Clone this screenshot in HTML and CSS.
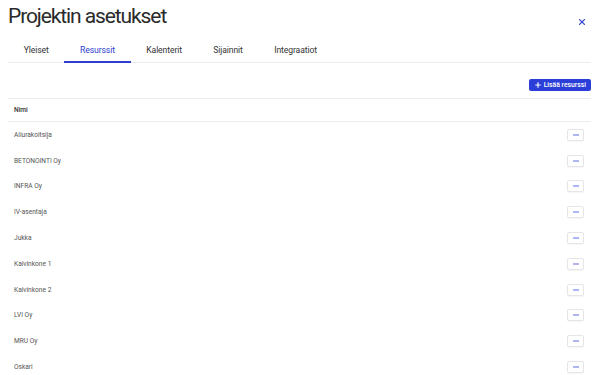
FILE: index.html
```html
<!DOCTYPE html>
<html lang="fi">
<head>
<meta charset="utf-8">
<title>Projektin asetukset</title>
<link rel="stylesheet" href="styles.css">
</head>
<body>
<div class="page">
  <header class="header">
    <h1 class="title">Projektin asetukset</h1>
    <button class="close" aria-label="Sulje">
      <svg width="6" height="6" viewBox="0 0 6 6"><path d="M0.6 0.6L5.4 5.4M5.4 0.6L0.6 5.4" stroke="#3346d3" stroke-width="1.3" stroke-linecap="round"/></svg>
    </button>
  </header>
  <nav class="tabs">
    <a class="tab">Yleiset</a>
    <a class="tab active">Resurssit</a>
    <a class="tab">Kalenterit</a>
    <a class="tab">Sijainnit</a>
    <a class="tab">Integraatiot</a>
  </nav>
  <div class="toolbar">
    <button class="add-btn">
      <svg width="6" height="6" viewBox="0 0 6 6"><path d="M3 0.3V5.7M0.3 3H5.7" stroke="#fff" stroke-width="1.1"/></svg>
      <span>Lisää resurssi</span>
    </button>
  </div>
  <div class="table">
    <div class="thead">Nimi</div>
    <div class="row"><span>Aliurakoitsija</span><button class="more"><svg width="6" height="2" viewBox="0 0 6 2"><circle cx="1" cy="1" r="0.8"/><circle cx="3" cy="1" r="0.8"/><circle cx="5" cy="1" r="0.8"/></svg></button></div>
    <div class="row"><span>BETONOINTI Oy</span><button class="more"><svg width="6" height="2" viewBox="0 0 6 2"><circle cx="1" cy="1" r="0.8"/><circle cx="3" cy="1" r="0.8"/><circle cx="5" cy="1" r="0.8"/></svg></button></div>
    <div class="row"><span>INFRA Oy</span><button class="more"><svg width="6" height="2" viewBox="0 0 6 2"><circle cx="1" cy="1" r="0.8"/><circle cx="3" cy="1" r="0.8"/><circle cx="5" cy="1" r="0.8"/></svg></button></div>
    <div class="row"><span>IV-asentaja</span><button class="more"><svg width="6" height="2" viewBox="0 0 6 2"><circle cx="1" cy="1" r="0.8"/><circle cx="3" cy="1" r="0.8"/><circle cx="5" cy="1" r="0.8"/></svg></button></div>
    <div class="row"><span>Jukka</span><button class="more"><svg width="6" height="2" viewBox="0 0 6 2"><circle cx="1" cy="1" r="0.8"/><circle cx="3" cy="1" r="0.8"/><circle cx="5" cy="1" r="0.8"/></svg></button></div>
    <div class="row"><span>Kaivinkone 1</span><button class="more"><svg width="6" height="2" viewBox="0 0 6 2"><circle cx="1" cy="1" r="0.8"/><circle cx="3" cy="1" r="0.8"/><circle cx="5" cy="1" r="0.8"/></svg></button></div>
    <div class="row"><span>Kaivinkone 2</span><button class="more"><svg width="6" height="2" viewBox="0 0 6 2"><circle cx="1" cy="1" r="0.8"/><circle cx="3" cy="1" r="0.8"/><circle cx="5" cy="1" r="0.8"/></svg></button></div>
    <div class="row"><span>LVI Oy</span><button class="more"><svg width="6" height="2" viewBox="0 0 6 2"><circle cx="1" cy="1" r="0.8"/><circle cx="3" cy="1" r="0.8"/><circle cx="5" cy="1" r="0.8"/></svg></button></div>
    <div class="row"><span>MRU Oy</span><button class="more"><svg width="6" height="2" viewBox="0 0 6 2"><circle cx="1" cy="1" r="0.8"/><circle cx="3" cy="1" r="0.8"/><circle cx="5" cy="1" r="0.8"/></svg></button></div>
    <div class="row"><span>Oskari</span><button class="more"><svg width="6" height="2" viewBox="0 0 6 2"><circle cx="1" cy="1" r="0.8"/><circle cx="3" cy="1" r="0.8"/><circle cx="5" cy="1" r="0.8"/></svg></button></div>
  </div>
</div>
</body>
</html>
```
FILE: styles.css
```css
* { box-sizing: border-box; }
html, body { margin: 0; padding: 0; background: #fff; overflow: hidden; }
body { font-family: Roboto, "Noto Sans", sans-serif; color: #2d2d2d; }
.page { padding: 0 10px 0 8px; }

.header {
  display: flex;
  justify-content: space-between;
  align-items: flex-start;
  padding-top: 3px;
}
.title {
  margin: 0;
  font-size: 21px;
  line-height: 26px;
  font-weight: 400;
  color: #2a2a2a;
  letter-spacing: -1.1px;
}
.close {
  border: 0;
  background: none;
  padding: 0;
  margin: 16px 6px 0 0;
  width: 6px;
  height: 6px;
  display: flex;
}

.tabs {
  display: flex;
  margin-top: 15px;
  border-bottom: 1px solid #ececec;
}
.tab {
  padding: 0 15.7px 5px;
  font-size: 8.6px;
  line-height: 12px;
  color: #333;
  letter-spacing: -0.1px;
  border-bottom: 2px solid transparent;
  margin-bottom: -1px;
}
.tab.active {
  color: #2c3dcf;
  border-bottom-color: #2c3dcf;
}

.toolbar {
  display: flex;
  justify-content: flex-end;
  padding: 16px 0 7px;
}
.add-btn {
  display: flex;
  align-items: center;
  gap: 3px;
  height: 12px;
  padding: 0 5px 0 6px;
  border: 0;
  border-radius: 2px;
  background: #2c3ed8;
  color: #fff;
  font-family: Roboto, sans-serif;
  font-size: 6.8px;
  font-weight: 500;
}

.table { border-top: 1px solid #ececec; }
.thead {
  height: 23px;
  display: flex;
  align-items: center;
  padding-left: 6px;
  font-size: 6.6px;
  font-weight: 500;
  color: #333;
  border-bottom: 1px solid #ececec;
}
.row {
  height: 25.8px;
  display: flex;
  align-items: center;
  justify-content: space-between;
  padding: 0 7px 0 6px;
  font-size: 6.6px;
  color: #555;
}
.more {
  width: 17px;
  height: 12px;
  padding: 0;
  border: 1px solid #e6e6e6;
  border-radius: 2px;
  background: #fff;
  box-shadow: 0 1px 1px rgba(0,0,0,0.04);
  display: flex;
  align-items: center;
  justify-content: center;
}
.more svg { display: block; fill: #4a5ae0; }
```
